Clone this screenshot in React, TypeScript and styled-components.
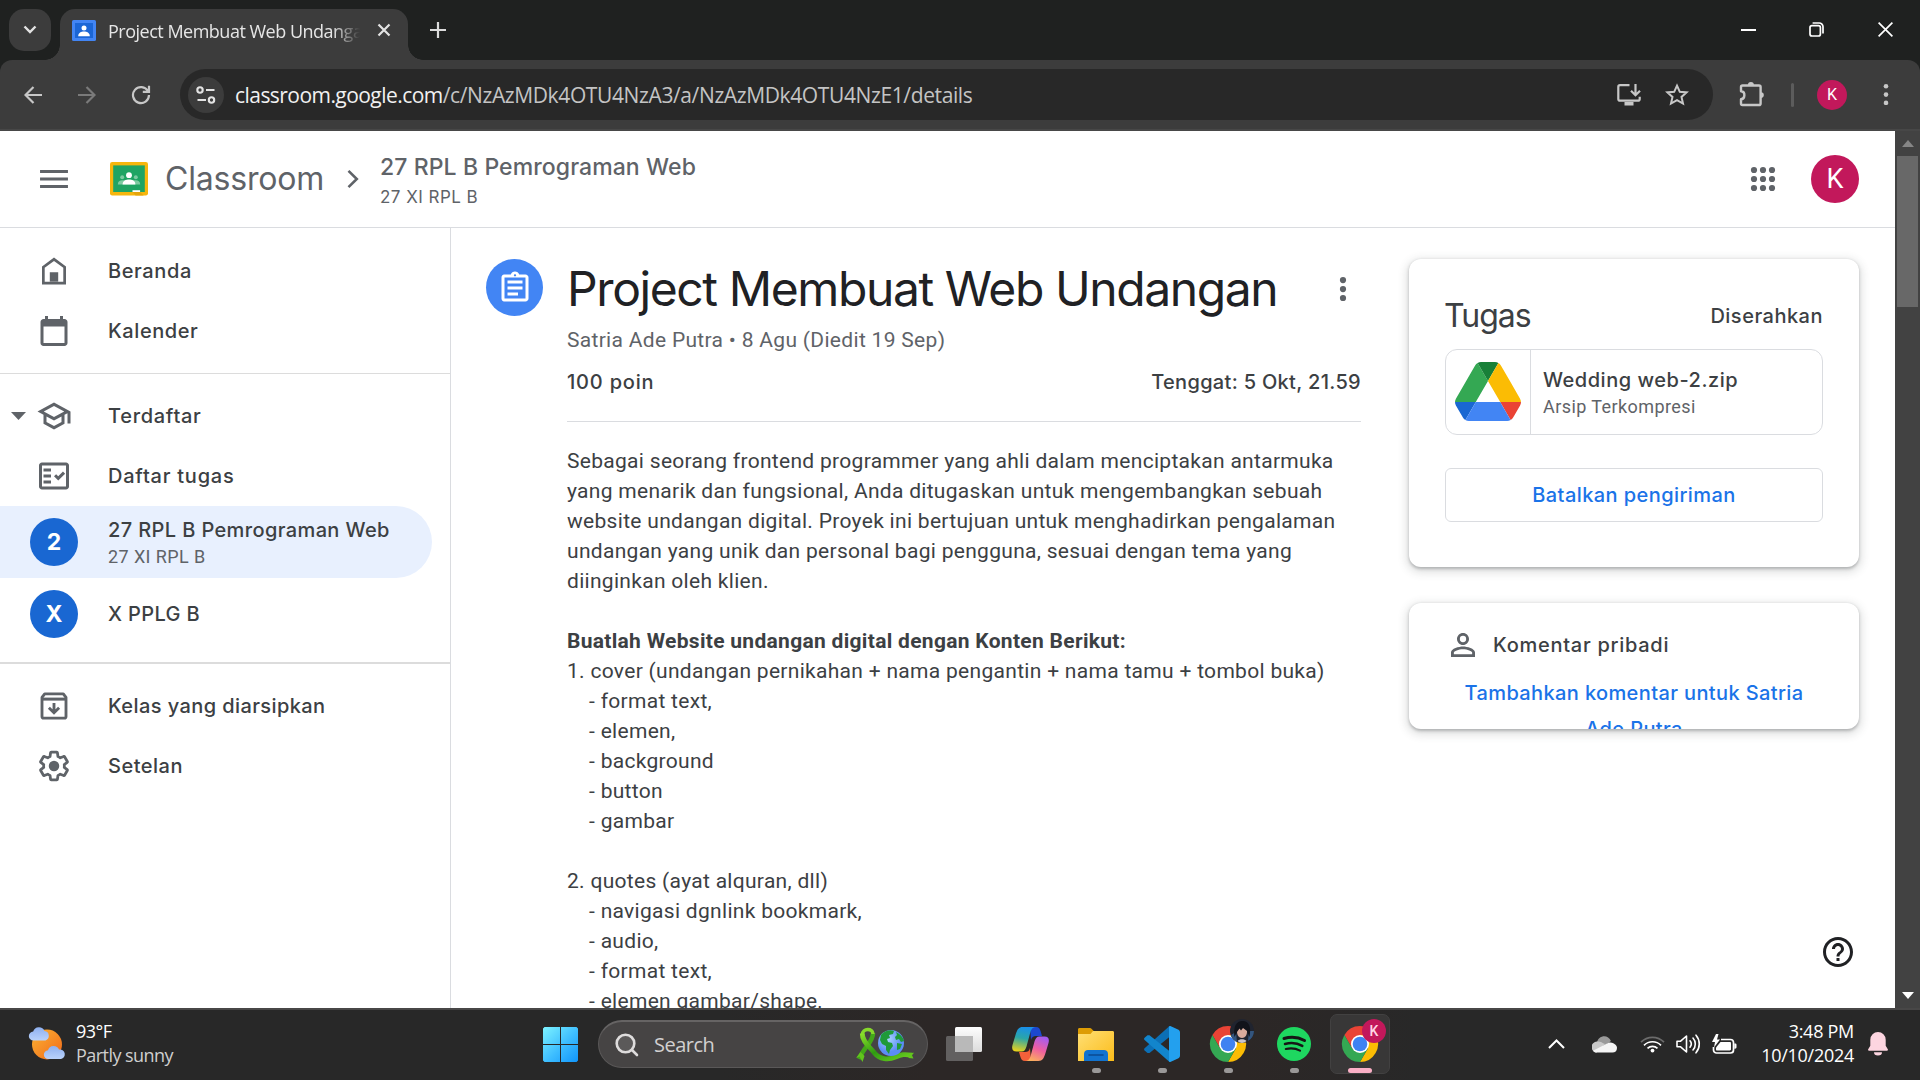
import React from 'react';
import styled, { createGlobalStyle } from 'styled-components';
import {
  MdOutlineFactCheck,
  MdOutlineAssignment,
  MdHelpOutline,
  MdPersonOutline,
  MdOutlineSchool,
} from 'react-icons/md';

const GOOGLE = 'Inter, "Liberation Sans", sans-serif';
const ROBOTO = 'Roboto, "Liberation Sans", sans-serif';
const SEGOE = '"Open Sans", "Noto Sans", sans-serif';

const Global = createGlobalStyle`
  *, *::before, *::after { box-sizing: border-box; }
  body { margin: 0; background: #fff; overflow: hidden; }
  svg { display: block; flex: none; }
`;

const Screen = styled.div`
  width: 1920px;
  height: 1080px;
  display: flex;
  flex-direction: column;
  overflow: hidden;
`;

/* ---------- Browser chrome ---------- */

const TabStrip = styled.div`
  height: 60px;
  flex: none;
  display: flex;
  align-items: flex-start;
  padding: 9px 0 0 9px;
  background: #1f2120;
`;

const TabSearch = styled.div`
  width: 42px;
  height: 42px;
  border-radius: 15px;
  background: #3c3c3c;
  display: flex;
  align-items: center;
  justify-content: center;
`;

const Tab = styled.div`
  position: relative;
  width: 348px;
  height: 51px;
  margin-left: 9px;
  padding: 0 17px 9px 12px;
  border-radius: 15px 15px 0 0;
  background: #3c3c3c;
  display: flex;
  align-items: center;

  &::before,
  &::after {
    content: '';
    position: absolute;
    bottom: 0;
    width: 15px;
    height: 15px;
  }
  &::before {
    left: -15px;
    background: radial-gradient(circle at 0 0, transparent 14.5px, #3c3c3c 15px);
  }
  &::after {
    right: -15px;
    background: radial-gradient(circle at 100% 0, transparent 14.5px, #3c3c3c 15px);
  }
`;

const TabTitle = styled.div`
  width: 252px;
  margin-left: 12px;
  overflow: hidden;
  white-space: nowrap;
  font: 400 18px/27px ${SEGOE};
  letter-spacing: -0.5px;
  padding-top: 3px;
  color: #e6e6e6;
  mask-image: linear-gradient(90deg, #000 225px, transparent 252px);
`;

const TabClose = styled.div`
  margin-left: auto;
`;

const NewTab = styled.div`
  width: 42px;
  height: 42px;
  margin-left: 9px;
  display: flex;
  align-items: center;
  justify-content: center;
`;

const WindowButtons = styled.div`
  display: flex;
  margin-left: auto;
  margin-top: -9px;
  height: 59px;
`;

const WindowButton = styled.div`
  width: 68.5px;
  display: flex;
  align-items: center;
  justify-content: center;
`;

const ToolbarBacking = styled.div`
  flex: none;
  background: #1f2120;
`;

const Toolbar = styled.div`
  height: 71px;
  display: flex;
  align-items: center;
  padding-left: 6px;
  overflow: hidden;
  background: #3c3c3c;
  border-radius: 12px 12px 0 0;
  border-bottom: 2px solid #474747;
`;

const ToolButton = styled.div<{ $w?: number }>`
  width: ${(p) => p.$w ?? 54}px;
  flex: none;
  display: flex;
  align-items: center;
  justify-content: center;
`;

const Omnibox = styled.div`
  width: 1533px;
  height: 51px;
  flex: none;
  margin-left: 12px;
  padding: 0 12px 0 8px;
  border-radius: 26px;
  background: #282828;
  display: flex;
  align-items: center;
`;

const SiteInfo = styled.div`
  width: 36px;
  height: 36px;
  border-radius: 50%;
  background: #3c3c3c;
  display: flex;
  align-items: center;
  justify-content: center;
`;

const Url = styled.div`
  flex: 1;
  margin-left: 11px;
  font: 400 21px/30px ${SEGOE};
  letter-spacing: -0.38px;
  color: #c4c4c4;
`;

const UrlHost = styled.span`
  color: #f1f1f1;
  letter-spacing: -0.55px;
`;

const ToolDivider = styled.div`
  width: 3px;
  height: 24px;
  flex: none;
  border-radius: 2px;
  background: #5c5c5c;
  margin: 0 23px 0 0;
`;

const Avatar = styled.div<{ $size: number; $font: number }>`
  width: ${(p) => p.$size}px;
  height: ${(p) => p.$size}px;
  border-radius: 50%;
  background: #c2185b;
  color: #fff;
  display: flex;
  align-items: center;
  justify-content: center;
  font: 400 ${(p) => p.$font}px/1 ${ROBOTO};
  flex: none;
`;

/* ---------- Page ---------- */

const Viewport = styled.div`
  height: 877px;
  flex: none;
  display: flex;
  overflow: hidden;
`;

const Page = styled.div`
  position: relative;
  width: 1895px;
  display: flex;
  flex-direction: column;
  background: #fff;
`;

const Scrollbar = styled.div`
  width: 25px;
  display: flex;
  flex-direction: column;
  align-items: center;
  background: #424242;
`;

const ScrollArrow = styled.div`
  height: 25px;
  display: flex;
  align-items: center;
`;

const ScrollThumb = styled.div`
  width: 21px;
  height: 151px;
  margin-bottom: auto;
  background: #686868;
`;

const Header = styled.header`
  height: 97px;
  flex: none;
  display: flex;
  align-items: center;
  padding: 0 36px;
  border-bottom: 1px solid #dadce0;
`;

const AppName = styled.div`
  margin-left: 17px;
  width: 161px;
  font: 400 32px/42px ${GOOGLE};
  letter-spacing: -0.2px;
  color: #5f6368;
`;

const Crumb = styled.div`
  margin-left: 20px;
  padding-top: 1px;
  display: flex;
  flex-direction: column;
  gap: 1px;
`;

const CrumbTitle = styled.div`
  font: 500 23px/33px ${GOOGLE};
  letter-spacing: 0.1px;
  color: #5f6368;
`;

const CrumbSection = styled.div`
  font: 400 17px/24px ${GOOGLE};
  letter-spacing: 0.47px;
  color: #5f6368;
`;

const HeaderActions = styled.div`
  margin-left: auto;
  display: flex;
  align-items: center;
  gap: 24px;
`;

const Body = styled.div`
  flex: 1;
  min-height: 0;
  display: flex;
`;

const Sidebar = styled.nav`
  width: 451px;
  flex: none;
  padding-top: 1px;
  border-right: 1px solid #dadce0;
`;

const NavGroup = styled.div<{ $line?: number }>`
  padding: 12px 0;
  border-bottom: ${(p) => p.$line ?? 0}px solid #dcdcdc;
`;

const NavRow = styled.div<{ $tall?: boolean; $active?: boolean }>`
  height: ${(p) => (p.$tall ? 72 : 60)}px;
  width: 432px;
  display: flex;
  align-items: center;
  border-radius: 0 36px 36px 0;
  background: ${(p) => (p.$active ? '#e8f0fe' : 'transparent')};
  color: #5f6368;
`;

const NavIcon = styled.div`
  width: 108px;
  flex: none;
  display: flex;
  justify-content: center;
`;

const NavCaret = styled.div`
  width: 36px;
  margin-right: -36px;
  display: flex;
  justify-content: center;
`;

const NavText = styled.div`
  display: flex;
  flex-direction: column;
`;

const NavLabel = styled.div<{ $ls?: number }>`
  font: 500 20px/30px ${GOOGLE};
  letter-spacing: ${(p) => p.$ls ?? 0.4}px;
  color: #3c4043;
  white-space: nowrap;
`;

const NavSub = styled.div`
  font: 400 18px/24px ${ROBOTO};
  letter-spacing: 0.4px;
  color: #5f6368;
`;

const ClassBadge = styled.div`
  width: 48px;
  height: 48px;
  border-radius: 50%;
  background: #1967d2;
  color: #fff;
  display: flex;
  align-items: center;
  justify-content: center;
  font: 700 23px/1 ${GOOGLE};
`;

const Main = styled.main`
  flex: 1;
  display: flex;
  align-items: flex-start;
  padding: 31px 36px 0 35px;
  overflow: hidden;
`;

const AssignIcon = styled.div`
  width: 57px;
  height: 57px;
  flex: none;
  border-radius: 50%;
  background: #4285f4;
  color: #fff;
  display: flex;
  align-items: center;
  justify-content: center;
`;

const Article = styled.article`
  width: 794px;
  flex: none;
  margin-left: 24px;
  margin-top: -2px;
`;

const TitleRow = styled.div`
  display: flex;
  align-items: center;
  justify-content: space-between;
  padding: 2px 12px 0 0;
  height: 62px;
`;

const Title = styled.h1`
  margin: 0;
  font: 400 48px/60px ${GOOGLE};
  letter-spacing: -1.4px;
  color: #202124;
  white-space: nowrap;
`;

const Byline = styled.div`
  margin-top: 6px;
  font: 400 21px/30px ${ROBOTO};
  letter-spacing: 0.31px;
  color: #5f6368;
`;

const Facts = styled.div`
  display: flex;
  justify-content: space-between;
  margin-top: 12px;
  padding-bottom: 24px;
  border-bottom: 1px solid #dadce0;
`;

const Strong = styled.div<{ $ls: number }>`
  font: 500 20px/30px ${GOOGLE};
  letter-spacing: ${(p) => p.$ls}px;
  color: #3c4043;
  white-space: nowrap;
`;

const Description = styled.div`
  margin-top: 24px;
  font: 400 21px/30px ${ROBOTO};
  letter-spacing: 0.3px;
  color: #3c4043;
  white-space: pre;
`;

const Aside = styled.aside`
  margin-left: 48px;
  width: 450px;
  display: flex;
  flex-direction: column;
  gap: 36px;
`;

const Card = styled.section<{ $h: number; $pad: string }>`
  height: ${(p) => p.$h}px;
  padding: ${(p) => p.$pad};
  border-radius: 12px;
  background: #fff;
  overflow: hidden;
  box-shadow: 0 1.5px 3px rgba(60, 64, 67, 0.3), 0 3px 9px 3px rgba(60, 64, 67, 0.15);
`;

const CardHead = styled.div`
  height: 48px;
  display: flex;
  align-items: center;
  justify-content: space-between;
`;

const CardTitle = styled.h2`
  margin: 0 0 0 -1px;
  font: 400 32px/48px ${GOOGLE};
  letter-spacing: -1px;
  color: #3c4043;
`;

const Attachment = styled.div`
  height: 86px;
  margin-top: 9px;
  border: 1px solid #dadce0;
  border-radius: 12px;
  display: flex;
`;

const AttachmentThumb = styled.div`
  width: 85px;
  padding-bottom: 2px;
  border-right: 1px solid #dadce0;
  display: flex;
  align-items: center;
  justify-content: center;
`;

const AttachmentText = styled.div`
  padding: 15px 0 0 12px;
`;

const FileKind = styled.div`
  margin-top: -1px;
  font: 400 18px/26px ${ROBOTO};
  letter-spacing: 0.42px;
  color: #5f6368;
`;

const OutlineButton = styled.div`
  height: 54px;
  margin-top: 33px;
  border: 1px solid #dadce0;
  border-radius: 6px;
  display: flex;
  align-items: center;
  justify-content: center;
  font: 500 20px/30px ${GOOGLE};
  letter-spacing: 0.42px;
  color: #1a73e8;
`;

const CommentHead = styled.div`
  height: 36px;
  display: flex;
  align-items: center;
  gap: 12px;
  color: #5f6368;
`;

const CommentLink = styled.div`
  margin-top: 12px;
  text-align: center;
  font: 500 20px/36px ${GOOGLE};
  letter-spacing: 0.38px;
  color: #1a73e8;
`;

const HelpButton = styled.div`
  position: absolute;
  right: 39px;
  bottom: 38px;
  color: #202124;
`;

/* ---------- Taskbar ---------- */

const Taskbar = styled.footer`
  height: 72px;
  flex: none;
  display: flex;
  align-items: center;
  padding-bottom: 2px;
  border-top: 2px solid #484747;
  background: linear-gradient(90deg, #282828 0 720px, #2c2726 930px 1240px, #282828 1420px);
  font: 400 18px/24px ${SEGOE};
  color: #fff;
`;

const Weather = styled.div`
  width: 535px;
  padding-left: 28px;
  display: flex;
  align-items: center;
  gap: 10px;
`;

const TwoLines = styled.div<{ $right?: boolean; $ls: number }>`
  text-align: ${(p) => (p.$right ? 'right' : 'left')};
  letter-spacing: ${(p) => p.$ls}px;
  margin-top: -3px;
`;

const Muted = styled.div`
  color: #cfcfcf;
`;

const Start = styled.div`
  width: 63px;
  padding-left: 8px;
`;

const SearchBox = styled.div`
  width: 330px;
  height: 48px;
  padding: 0 13px 0 16px;
  border: 1px solid #5a5858;
  border-top: 2px solid #666464;
  border-radius: 24px;
  background: #464444;
  display: flex;
  align-items: center;
`;

const SearchLabel = styled.div`
  margin-left: 15px;
  font: 400 20px/30px ${SEGOE};
  letter-spacing: -0.5px;
  color: #d2d0d0;
  flex: 1;
`;

const Apps = styled.div`
  display: flex;
  margin-left: 3px;
`;

const AppCell = styled.div`
  width: 66px;
  height: 60px;
  display: flex;
  justify-content: center;
`;

const AppTile = styled.div<{ $active?: boolean }>`
  position: relative;
  width: 60px;
  height: 60px;
  border-radius: 7px;
  border: 1px solid ${(p) => (p.$active ? '#424141' : 'transparent')};
  background: ${(p) => (p.$active ? '#383737' : 'transparent')};
  display: flex;
  align-items: center;
  justify-content: center;
`;

const RunMark = styled.div<{ $active?: boolean }>`
  position: absolute;
  bottom: 0;
  left: ${(p) => (p.$active ? 17 : 24.5)}px;
  width: ${(p) => (p.$active ? 24 : 9)}px;
  height: 5px;
  border-radius: 3px;
  background: ${(p) => (p.$active ? '#fbb0c6' : '#9a9898')};
`;

const Tray = styled.div`
  margin-left: auto;
  padding-right: 32px;
  display: flex;
  align-items: center;
`;

const TraySlot = styled.div<{ $gap: number }>`
  margin-left: ${(p) => p.$gap}px;
`;

/* ---------- Drawings ---------- */

const Glyph = ({ d, size = 36 }: { d: string; size?: number }) => (
  <svg width={size} height={size} viewBox="0 0 24 24" fill="currentColor"><path d={d} /></svg>
);

const HOME = 'M12 3 4 9v12h16V9l-8-6zm6.200 16.200H5.800v-9.300L12 5.300l6.200 4.600v9.300zM9.200 12.800h5.600v6.500H9.200z';
const CALENDAR = 'M19 4h-1V2h-2v2H8V2H6v2H5c-1.11 0-1.99.9-1.99 2L3 20c0 1.1.89 2 2 2h14c1.1 0 2-.9 2-2V6c0-1.1-.9-2-2-2zm0 16H5V9h14v11z';
const GEAR = 'M19.43 12.98c.04-.32.07-.64.07-.98 0-.34-.03-.66-.07-.98l2.11-1.65c.19-.15.24-.42.12-.64l-2-3.46a.5.5 0 0 0-.61-.22l-2.49 1c-.52-.4-1.08-.73-1.69-.98l-.38-2.65A.488.488 0 0 0 14 2h-4c-.25 0-.46.18-.49.42l-.38 2.65c-.61.25-1.17.59-1.69.98l-2.49-1a.566.566 0 0 0-.18-.03c-.17 0-.34.09-.43.25l-2 3.46c-.13.22-.07.49.12.64l2.11 1.65c-.04.32-.07.65-.07.98 0 .33.03.66.07.98l-2.11 1.65c-.19.15-.24.42-.12.64l2 3.46a.5.5 0 0 0 .61.22l2.49-1c.52.4 1.08.73 1.69.98l.38 2.65c.03.24.24.42.49.42h4c.25 0 .46-.18.49-.42l.38-2.65c.61-.25 1.17-.59 1.69-.98l2.49 1c.06.02.12.03.18.03.17 0 .34-.09.43-.25l2-3.46c.12-.22.07-.49-.12-.64l-2.11-1.65z';

const GearIcon = () => (
  <svg width="36" height="36" viewBox="0 0 24 24">
    <path d={GEAR} transform="translate(12 12) scale(.92) translate(-12 -12)" fill="none" stroke="currentColor" strokeWidth="2" strokeLinejoin="round" />
    <circle cx="12" cy="12" r="3.500" fill="currentColor" />
  </svg>
);

const ArchiveIcon = () => (
  <svg width="36" height="36" viewBox="0 0 24 24" fill="none" stroke="currentColor" strokeWidth="1.900">
    <path d="M4 6.300 5.800 3.900h12.400L20 6.300v12.700c0 .7-.4 1.100-1.100 1.100H5.100c-.7 0-1.100-.4-1.100-1.100z" strokeLinejoin="round" />
    <path d="M4 7.400h16" strokeWidth="2" />
    <path d="M12 10v6.300M8.600 13.100l3.400 3.400 3.400-3.400" />
  </svg>
);

const Kebab = ({ r, gap, color }: { r: number; gap: number; color: string }) => (
  <svg width={12} height={gap * 2 + r * 2} fill={color}>
    {[0, 1, 2].map((i) => <circle key={i} cx="6" cy={r + i * gap} r={r} />)}
  </svg>
);

const AppsGrid = () => (
  <svg width="48" height="48" fill="#5f6368">
    {[15, 24, 33].map((y) => [15, 24, 33].map((x) => <circle key={`${x}-${y}`} cx={x} cy={y} r="3.1" />))}
  </svg>
);

const ClassroomLogo = () => (
  <svg width="38" height="34" viewBox="0 0 38 34">
    <rect width="38" height="33.5" rx="2.2" fill="#f6b60d" />
    <rect x="3.2" y="3.4" width="31.6" height="26.6" fill="#1fa463" />
    <circle cx="19" cy="13.2" r="2.9" fill="#fff" />
    <circle cx="12.2" cy="15.2" r="2" fill="#7ccba1" />
    <circle cx="25.8" cy="15.2" r="2" fill="#7ccba1" />
    <path d="M7.8 22.5c0-3 2-4.2 4.4-4.2h13.6c2.4 0 4.4 1.2 4.4 4.2z" fill="#7ccba1" />
    <path d="M12.6 22.5c0-3.7 3.4-4.9 6.4-4.9s6.4 1.2 6.4 4.9z" fill="#fff" />
    <path d="M22.5 30v-1.8h7.6V30z" fill="#fff" />
    <path d="M22.5 30h7.6l3.5 3.5h-8z" fill="#e5a50c" />
  </svg>
);

const TabIcon = () => (
  <svg width="24" height="21" viewBox="0 0 24 21">
    <rect width="24" height="21" rx="1.6" fill="#4285f4" />
    <rect x="3" y="3" width="18" height="15" fill="#1b66d6" />
    <circle cx="12" cy="8" r="2.5" fill="#fff" />
    <path d="M6.2 16.2c0-3.6 3-4.7 5.8-4.7s5.8 1.1 5.8 4.7z" fill="#fff" />
  </svg>
);

const DriveLogo = () => (
  <svg width="66" height="59" viewBox="0 0 87.3 78">
    <path fill="#1967d2" d="m6.6 66.85 3.85 6.65c.8 1.4 1.95 2.5 3.3 3.3L27.5 53H0c0 1.55.4 3.1 1.2 4.5z" />
    <path fill="#34a853" d="M43.65 25 29.9 1.2c-1.35.8-2.5 1.9-3.3 3.3L1.2 48.5C.4 49.9 0 51.45 0 53h27.5z" />
    <path fill="#ea4335" d="M73.55 76.8c1.35-.8 2.5-1.9 3.3-3.3l1.6-2.75 7.65-13.25c.8-1.4 1.2-2.95 1.2-4.5H59.8z" />
    <path fill="#188038" d="M43.65 25 57.4 1.2C56.05.4 54.5 0 52.9 0H34.4c-1.6 0-3.15.45-4.5 1.2z" />
    <path fill="#4285f4" d="M59.8 53H27.5L13.75 76.8c1.35.8 2.9 1.2 4.5 1.2h50.8c1.6 0 3.15-.45 4.5-1.2z" />
    <path fill="#fbbc04" d="m73.4 26.5-12.7-22c-.8-1.4-1.95-2.5-3.3-3.3L43.65 25l16.15 28h27.45c0-1.55-.4-3.1-1.2-4.5z" />
  </svg>
);

const line = { fill: 'none', stroke: '#c7c7c7', strokeWidth: 2.2 } as const;

const WeatherIcon = () => (
  <svg width="38" height="36" viewBox="0 0 38 36">
    <defs>
      <linearGradient id="sun" x1="0" y1="0" x2="1" y2="1"><stop offset="0" stopColor="#fcb332" /><stop offset="1" stopColor="#f0681a" /></linearGradient>
      <linearGradient id="cloud" x1="0" y1="0" x2="0" y2="1"><stop offset="0" stopColor="#8fb0f0" /><stop offset="1" stopColor="#b9d2fb" /></linearGradient>
    </defs>
    <circle cx="19" cy="18.5" r="15" fill="url(#sun)" />
    <path d="M5.5 14.5a4.5 4.5 0 0 1-.3-9A6 6 0 0 1 16.500 5a4.900 4.900 0 0 1 1 9.500z" fill="url(#cloud)" />
    <path d="M20.500 33a4.400 4.400 0 0 1-.5-8.800 5.800 5.800 0 0 1 11-.6A4.800 4.800 0 0 1 33 33z" fill="url(#cloud)" />
  </svg>
);

const WindowsLogo = () => (
  <svg width="35" height="35" viewBox="0 0 35 35">
    <defs><linearGradient id="win" gradientUnits="userSpaceOnUse" x1="0" y1="0" x2="35" y2="35"><stop offset="0" stopColor="#7df3ff" /><stop offset=".55" stopColor="#3dbdff" /><stop offset="1" stopColor="#1095fb" /></linearGradient></defs>
    <path fill="url(#win)" d="M1.500 0H17v17H0V1.500zM18 0h15.500L35 1.500V17H18zM0 18h17v17H1.500L0 33.500zM18 18h17v15.500L33.500 35H18z" />
  </svg>
);

const RibbonGlobe = () => (
  <svg width="58" height="35" viewBox="0 0 58 35">
    <defs>
      <linearGradient id="rib" x1="0" y1="0" x2="1" y2="1"><stop offset="0" stopColor="#8be02a" /><stop offset=".5" stopColor="#2f9a12" /><stop offset="1" stopColor="#6fd321" /></linearGradient>
      <radialGradient id="sea" cx=".4" cy=".35"><stop offset="0" stopColor="#a9d4ff" /><stop offset="1" stopColor="#5b8df5" /></radialGradient>
    </defs>
    <path d="M17 6.500C17 15 8 20 3 32" fill="none" stroke="#43a818" strokeWidth="4.600" />
    <path d="M6.500 7.500C6.500 1 17 1 17 7" fill="none" stroke="#86d82c" strokeWidth="3.600" />
    <path d="M6.300 6.500C6 15 14 20 18.500 26c5 6.500 14 7 21 4 6-2.500 9-3 16-1.800" fill="none" stroke="url(#rib)" strokeWidth="4.800" />
    <path d="M0 31l3.500-1.500L6.500 35l2-6-4-4zM53 26l5-.3-2 2.500 1.500 3.300-5-.5z" fill="#62c51d" />
    <circle cx="35" cy="16" r="13" fill="url(#sea)" />
    <path d="M25 8c3-4 9-6 13-4l-1 3-4 1 1 3-3 1 1 3 4 1 1 3-3 4-1 4-3-4v-4l-4-2-2-4zM40 5c4 2 7 5 8 9l-3 1-2-3-3 1-1-3 2-2zM41 16l5 1-2 5-3 1z" fill="#1f9a3a" />
  </svg>
);

const TaskView = () => (
  <svg width="36" height="34" viewBox="0 0 36 34">
    <defs><linearGradient id="tv" x1="0" y1="0" x2="0" y2="1"><stop offset="0" stopColor="#fdfdfd" /><stop offset="1" stopColor="#dcdcdc" /></linearGradient></defs>
    <rect x="0" y="9" width="27" height="25" rx="1.500" fill="#626060" />
    <rect x="9" y="0" width="27" height="25" rx="1.500" fill="url(#tv)" />
    <path d="M9 9h18v16H9z" fill="#b9b9b9" />
  </svg>
);

const Copilot = () => (
  <svg width="37" height="34" viewBox="0 0 37 34">
    <defs>
      <linearGradient id="cpA" x1=".5" y1="0" x2=".3" y2="1"><stop offset="0" stopColor="#1a8fe8" /><stop offset=".45" stopColor="#2aa6a8" /><stop offset="1" stopColor="#e9d21b" /></linearGradient>
      <linearGradient id="cpB" x1=".7" y1="0" x2=".3" y2="1"><stop offset="0" stopColor="#a45cf0" /><stop offset=".5" stopColor="#ef5f9f" /><stop offset="1" stopColor="#fbb05c" /></linearGradient>
    </defs>
    <path d="M18 0h6c3 0 4 2 4.700 4.500L30 9h-6c-3 0-4 1-5 4z" fill="#1c48cf" />
    <path d="M19 34h-6c-3 0-4-2-4.700-4.500L7 25h6c3 0 4-1 5-4z" fill="#f2603a" />
    <path d="M24 0H10.500C6.500 0 5 3 3.500 8L.5 18c-1 4 0 6.500 4 6.500h5c3 0 4-2 5-5L18 6.500C19 2 21 0 24 0z" fill="url(#cpA)" />
    <path d="M13 34h13.500c4 0 5.500-3 7-8l3-10c1-4 0-6.500-4-6.500h-5c-3 0-4 2-5 5L19 27.500C18 32 16 34 13 34z" fill="url(#cpB)" />
  </svg>
);

const Explorer = () => (
  <svg width="36" height="33" viewBox="0 0 36 33">
    <defs><linearGradient id="fold" x1="0" y1="0" x2="1" y2="1"><stop offset="0" stopColor="#ffdf75" /><stop offset="1" stopColor="#fbbc1a" /></linearGradient></defs>
    <path d="M0 1.500C0 .6.500 0 1.500 0h10c1 0 1.500.3 2.200 1L16 3.200V9H0z" fill="#dd9c05" />
    <path d="M0 6h12.500L15 3h19.500c1 0 1.500.6 1.500 1.500V33H0z" fill="url(#fold)" />
    <path d="M6 33v-7c0-2.400 1.600-4 4-4h16c2.400 0 4 1.600 4 4v7z" fill="#1273cf" />
    <path d="M11 27h14" stroke="#0b4b93" strokeWidth="1.600" strokeLinecap="round" />
  </svg>
);

const VsCode = () => (
  <svg width="36" height="36" viewBox="0 0 36 36">
    <path d="M26 0v10.500L5.500 27 3.500 27 .6 24.400c-.7-.7-.7-1.500 0-2.200L25 .5z" fill="#0c6fb5" />
    <path d="M26 36V25.500L5.500 9.200H3.500L.6 11.800c-.7.700-.7 1.500 0 2.200L25 35.500z" fill="#1285cc" />
    <path d="M26.300 0 34 3.600c1.300.6 2 1.500 2 2.900v23c0 1.400-.7 2.300-2 2.900L26.300 36c-.8 0-1.300-.4-1.300-1.300V1.300c0-.9.500-1.300 1.300-1.300z" fill="#23a0ee" />
  </svg>
);

const BadgeText = styled.text`
  font: 500 14px ${ROBOTO};
  fill: #ffd5e4;
  text-anchor: middle;
`;

const Chrome = ({ badge }: { badge: 'photo' | 'letter' }) => (
  <svg width="60" height="60" viewBox="-30 -30 60 60">
    <path d="M-15.600-9A18 18 0 0 1 15.600-9H0L-7.800 4.500z" fill="#ea4335" />
    <path d="M15.600-9A18 18 0 0 1 0 18L7.800 4.500 0-9z" fill="#fbbc04" />
    <path d="M0 18A18 18 0 0 1-15.600-9L-7.800 4.500H7.800z" fill="#34a853" />
    <circle r="9" fill="#fff" />
    <circle r="7.300" fill="#3f82f1" />
    {badge === 'letter' ? (
      <>
        <circle cx="14" cy="-13" r="12" fill="#c2185b" />
        <BadgeText x="14" y="-8">K</BadgeText>
      </>
    ) : (
      <>
        <circle cx="14" cy="-13" r="12" fill="#20242f" />
        <path d="M3-9a12 12 0 0 0 6 7.200L8-12zM26-13a12 12 0 0 1-6 10l1-10z" fill="#33557e" />
        <path d="M9-14c1-4 9-4 10 0 .5 5-2 8-5 8s-5.500-3-5-8z" fill="#d9ab9c" />
        <path d="M6.500-7C5-20 10-23 14.500-23S24-20 21.500-7L19-13l-4-3-2 2.500-1.500-2L9-12z" fill="#11131a" />
        <path d="M9.500-3c2-2.500 7-2.500 9 0-2.500 2.500-6.500 2.500-9 0z" fill="#c9c4cc" />
      </>
    )}
  </svg>
);

const Spotify = () => (
  <svg width="34" height="34" viewBox="0 0 34 34">
    <circle cx="17" cy="17" r="17" fill="#1ed760" />
    <g fill="none" stroke="#161616" strokeLinecap="round">
      <path d="M7 11.500c7-2 14.500-1.300 20.500 2" strokeWidth="3" />
      <path d="M8 17c6-1.600 12.200-1 17.300 1.900" strokeWidth="2.500" />
      <path d="M8.800 22c5-1.200 10-.7 14.200 1.700" strokeWidth="2.100" />
    </g>
  </svg>
);

/* ---------- Content ---------- */

const DESCRIPTION_INTRO = `Sebagai seorang frontend programmer yang ahli dalam menciptakan antarmuka
yang menarik dan fungsional, Anda ditugaskan untuk mengembangkan sebuah
website undangan digital. Proyek ini bertujuan untuk menghadirkan pengalaman
undangan yang unik dan personal bagi pengguna, sesuai dengan tema yang
diinginkan oleh klien.

`;

const DESCRIPTION_LIST = `
1. cover (undangan pernikahan + nama pengantin + nama tamu + tombol buka)
    - format text,
    - elemen,
    - background
    - button
    - gambar

2. quotes (ayat alquran, dll)
    - navigasi dgnlink bookmark,
    - audio,
    - format text,
    - elemen gambar/shape,`;

export default function App() {
  return (
    <Screen>
      <Global />
      <TabStrip>
        <TabSearch>
          <svg width="14" height="10" fill="none" stroke="#e3e3e3" strokeWidth="2.400"><path d="M1.500 1.500 7 7l5.500-5.500" /></svg>
        </TabSearch>
        <Tab>
          <TabIcon />
          <TabTitle>Project Membuat Web Undangan</TabTitle>
          <TabClose>
            <svg width="14" height="14" stroke="#e3e3e3" strokeWidth="2.200"><path d="m1.500 1.500 11 11m0-11-11 11" /></svg>
          </TabClose>
        </Tab>
        <NewTab>
          <svg width="16" height="16" stroke="#dcdcdc" strokeWidth="2.200"><path d="M8 0v16M0 8h16" /></svg>
        </NewTab>
        <WindowButtons>
          <WindowButton><svg width="15" height="2"><path d="M0 0h15v2H0z" fill="#fff" /></svg></WindowButton>
          <WindowButton>
            <svg width="16" height="15" fill="none" stroke="#fff" strokeWidth="1.700"><rect x="1" y="3.600" width="10.400" height="10.400" rx="2" /><path d="M3.600 1h6.600A3.800 3.800 0 0 1 14 4.800v6.600" /></svg>
          </WindowButton>
          <WindowButton><svg width="15" height="15" stroke="#fff" strokeWidth="1.700"><path d="m.6.6 13.800 13.800m0-13.800L.6 14.400" /></svg></WindowButton>
        </WindowButtons>
      </TabStrip>

      <ToolbarBacking>
        <Toolbar>
          <ToolButton><svg width="18" height="18" {...line}><path d="M18 9H1.500M9.500 1 1.500 9l8 8" /></svg></ToolButton>
          <ToolButton><svg width="18" height="18" {...line} stroke="#7a7a7a"><path d="M0 9h16.500M8.500 1l8 8-8 8" /></svg></ToolButton>
          <ToolButton>
            <svg width="20" height="20" {...line}><path d="M17 6.200A8 8 0 1 0 18 10" /><path d="M18 .8v6.100h-6.200" /></svg>
          </ToolButton>
          <Omnibox>
            <SiteInfo>
              <svg width="20" height="18" fill="none" stroke="#e3e3e3" strokeWidth="2.100"><circle cx="4" cy="4" r="2.700" /><path d="M10 4h8.500M1.500 14H10" /><circle cx="15.500" cy="14" r="2.700" /></svg>
            </SiteInfo>
            <Url><UrlHost>classroom.google.com</UrlHost>/c/NzAzMDk4OTU4NzA3/a/NzAzMDk4OTU4NzE1/details</Url>
            <ToolButton $w={48}>
              <svg width="24" height="22" {...line}><path d="M12.500 1.200H3c-1 0-1.700.7-1.700 1.700v12c0 1 .7 1.700 1.700 1.700h18c1 0 1.700-.7 1.700-1.700v-2.200" /><path d="M7.500 19.800h9" strokeWidth="3.400" /><path d="M18.500 0v11M14 6.700l4.500 4.500L23 6.700" /></svg>
            </ToolButton>
            <ToolButton $w={48}>
              <svg width="24" height="23" {...line} strokeWidth="2"><path d="m12 2.600 2.800 6.200 6.800.6-5.100 4.500 1.500 6.700-6-3.500-6 3.500 1.500-6.700-5.100-4.500 6.800-.6z" /></svg>
            </ToolButton>
          </Omnibox>
          <ToolButton $w={78}>
            <svg width="27" height="26" fill="none" stroke="#c7c7c7" strokeWidth="2.400" strokeLinejoin="round"><path d="M3.500 3.500H20a1.600 1.600 0 0 1 1.600 1.600v16.300A1.600 1.600 0 0 1 20 23H3.500c-.9 0-1.500-.6-1.500-1.500v-4.300c4 0 5-7.500 0-8V5c0-.9.600-1.500 1.500-1.500z" /><path d="M8.900 3a3 3 0 0 1 6 0zM22 10.300a2.700 2.700 0 0 1 0 5.600z" fill="#c7c7c7" stroke="none" /></svg>
          </ToolButton>
          <ToolDivider />
          <Avatar $size={30} $font={16}>K</Avatar>
          <ToolButton $w={78}><Kebab r={2.300} gap={8.300} color="#c7c7c7" /></ToolButton>
        </Toolbar>
      </ToolbarBacking>

      <Viewport>
        <Page>
          <Header>
            <svg width="36" height="36" viewBox="0 0 24 24" fill="#5f6368"><path d="M2.700 18h18.600v-2H2.700zm0-5h18.600v-2H2.700zm0-7v2h18.600V6z" /></svg>
            <svg width="38" height="36" />
            <ClassroomLogo />
            <AppName>Classroom</AppName>
            <svg width="34" height="20" fill="none" stroke="#5f6368" strokeWidth="2.600"><path d="m22.500 1.800 8.300 8.200-8.300 8.200" /></svg>
            <Crumb>
              <CrumbTitle>27 RPL B Pemrograman Web</CrumbTitle>
              <CrumbSection>27 XI RPL B</CrumbSection>
            </Crumb>
            <HeaderActions>
              <AppsGrid />
              <Avatar $size={48} $font={27}>K</Avatar>
            </HeaderActions>
          </Header>

          <Body>
            <Sidebar>
              <NavGroup $line={1}>
                <NavRow><NavIcon><Glyph d={HOME} /></NavIcon><NavLabel $ls={0.6}>Beranda</NavLabel></NavRow>
                <NavRow><NavIcon><Glyph d={CALENDAR} /></NavIcon><NavLabel $ls={0.58}>Kalender</NavLabel></NavRow>
              </NavGroup>
              <NavGroup $line={2}>
                <NavRow>
                  <NavCaret><svg width="15" height="8" fill="currentColor"><path d="M0 0h15L7.500 8z" /></svg></NavCaret>
                  <NavIcon><MdOutlineSchool size={36} /></NavIcon>
                  <NavLabel $ls={0.7}>Terdaftar</NavLabel>
                </NavRow>
                <NavRow><NavIcon><MdOutlineFactCheck size={36} /></NavIcon><NavLabel $ls={0.76}>Daftar tugas</NavLabel></NavRow>
                <NavRow $tall $active>
                  <NavIcon><ClassBadge>2</ClassBadge></NavIcon>
                  <NavText>
                    <NavLabel $ls={0.38}>27 RPL B Pemrograman Web</NavLabel>
                    <NavSub>27 XI RPL B</NavSub>
                  </NavText>
                </NavRow>
                <NavRow $tall>
                  <NavIcon><ClassBadge>X</ClassBadge></NavIcon>
                  <NavLabel $ls={0.36}>X PPLG B</NavLabel>
                </NavRow>
              </NavGroup>
              <NavGroup>
                <NavRow><NavIcon><ArchiveIcon /></NavIcon><NavLabel $ls={0.41}>Kelas yang diarsipkan</NavLabel></NavRow>
                <NavRow><NavIcon><GearIcon /></NavIcon><NavLabel $ls={0.5}>Setelan</NavLabel></NavRow>
              </NavGroup>
            </Sidebar>

            <Main>
              <AssignIcon><MdOutlineAssignment size={36} /></AssignIcon>
              <Article>
                <TitleRow>
                  <Title>Project Membuat Web Undangan</Title>
                  <Kebab r={3.100} gap={9} color="#5f6368" />
                </TitleRow>
                <Byline>Satria Ade Putra • 8 Agu (Diedit 19 Sep)</Byline>
                <Facts>
                  <Strong $ls={0.8}>100 poin</Strong>
                  <Strong $ls={0.31}>Tenggat: 5 Okt, 21.59</Strong>
                </Facts>
                <Description>
                  {DESCRIPTION_INTRO}
                  <b>Buatlah Website undangan digital dengan Konten Berikut:</b>
                  {DESCRIPTION_LIST}
                </Description>
              </Article>

              <Aside>
                <Card $h={308} $pad="33px 36px 0">
                  <CardHead>
                    <CardTitle>Tugas</CardTitle>
                    <Strong $ls={0.5}>Diserahkan</Strong>
                  </CardHead>
                  <Attachment>
                    <AttachmentThumb><DriveLogo /></AttachmentThumb>
                    <AttachmentText>
                      <Strong $ls={0.52}>Wedding web-2.zip</Strong>
                      <FileKind>Arsip Terkompresi</FileKind>
                    </AttachmentText>
                  </Attachment>
                  <OutlineButton>Batalkan pengiriman</OutlineButton>
                </Card>
                <Card $h={126} $pad="24px 36px 0">
                  <CommentHead>
                    <MdPersonOutline size={36} />
                    <Strong $ls={0.72}>Komentar pribadi</Strong>
                  </CommentHead>
                  <CommentLink>Tambahkan komentar untuk Satria<br />Ade Putra</CommentLink>
                </Card>
              </Aside>
            </Main>
          </Body>
          <HelpButton><MdHelpOutline size={36} /></HelpButton>
        </Page>
        <Scrollbar>
          <ScrollArrow><svg width="12" height="7"><path d="M0 7h12L6 0z" fill="#868686" /></svg></ScrollArrow>
          <ScrollThumb />
          <ScrollArrow><svg width="12" height="7"><path d="M0 0h12L6 7z" fill="#fff" /></svg></ScrollArrow>
        </Scrollbar>
      </Viewport>

      <Taskbar>
        <Weather>
          <WeatherIcon />
          <TwoLines $ls={-0.55}>
            <div>93°F</div>
            <Muted>Partly sunny</Muted>
          </TwoLines>
        </Weather>
        <Start><WindowsLogo /></Start>
        <SearchBox>
          <svg width="24" height="24" fill="none" stroke="#dedcdc" strokeWidth="2.600" strokeLinecap="round"><circle cx="10.500" cy="10.500" r="8.800" fill="#5b5959" /><path d="m17 17 5 5" /></svg>
          <SearchLabel>Search</SearchLabel>
          <RibbonGlobe />
        </SearchBox>
        <Apps>
          <AppCell><AppTile><TaskView /></AppTile></AppCell>
          <AppCell><AppTile><Copilot /></AppTile></AppCell>
          <AppCell><AppTile><Explorer /><RunMark /></AppTile></AppCell>
          <AppCell><AppTile><VsCode /><RunMark /></AppTile></AppCell>
          <AppCell><AppTile><Chrome badge="photo" /><RunMark /></AppTile></AppCell>
          <AppCell><AppTile><Spotify /><RunMark /></AppTile></AppCell>
          <AppCell><AppTile $active><Chrome badge="letter" /><RunMark $active /></AppTile></AppCell>
        </Apps>
        <Tray>
          <svg width="17" height="10" fill="none" stroke="#fff" strokeWidth="2"><path d="m1 9 7.500-7.500L16 9" /></svg>
          <TraySlot $gap={27}>
            <svg width="25" height="17" viewBox="0 0 25 17"><path d="M5 6C7-1 16-2 19 5l-7 5z" fill="#9a9a9a" /><path d="M5 16.500A5.400 5.400 0 0 1 5 5.600c3-.6 5 1 8 2.400l-8 8z" fill="#c9c9c9" /><path d="M4.500 16.500c-1.600 0-2.700-.6-3.500-1.800L17 6.500c4 0 8 2 8 5.500 0 3-2 4.500-4.500 4.500z" fill="#f5f5f5" /></svg>
          </TraySlot>
          <TraySlot $gap={23}>
            <svg width="25" height="18" fill="none" stroke="#fff" strokeWidth="1.700"><path d="M1 7.200a16 16 0 0 1 23 0" stroke="#6b6b6b" /><path d="M4 10.300a12 12 0 0 1 17 0M7.500 13.400a7.400 7.400 0 0 1 10 0" /><circle cx="12.500" cy="15.600" r="1.900" fill="#fff" stroke="none" /></svg>
          </TraySlot>
          <TraySlot $gap={11}>
            <svg width="26" height="20" fill="none" stroke="#fff" strokeWidth="1.600" strokeLinejoin="round"><path d="M1 7.200v5.600h3.600L10.500 18V2L4.600 7.200z" /><path d="M14 6.800a5 5 0 0 1 0 6.400M17 4a9 9 0 0 1 0 12M20 1.200a13.500 13.500 0 0 1 0 17.600" strokeLinecap="round" /></svg>
          </TraySlot>
          <TraySlot $gap={10}>
            <svg width="25" height="21" viewBox="0 0 25 21"><path d="M9 5.500h9.500a3 3 0 0 1 3 3v7.500a3 3 0 0 1-3 3H4.500a3 3 0 0 1-3-3V13" fill="none" stroke="#fff" strokeWidth="1.700" /><path d="M8.500 8h9.300c.7 0 1.200.5 1.200 1.200v6c0 .7-.5 1.200-1.200 1.200H5c-.6 0-1-.4-1-1V13.500z" fill="#fff" /><path d="M22.300 9.500h.7c1 0 1.500.5 1.500 1.400v2.400c0 .9-.5 1.400-1.500 1.400h-.7zM4 0 0 8h3l-1 5.500L8 5.500H5L6.500 0z" fill="#fff" /></svg>
          </TraySlot>
          <TraySlot $gap={24}>
            <TwoLines $right $ls={-0.28}>
              <div>3:48 PM</div>
              <div>10/10/2024</div>
            </TwoLines>
          </TraySlot>
          <TraySlot $gap={14}>
            <svg width="20" height="24" viewBox="0 0 20 24" fill="#fdd5e0"><path d="M10 0a7.700 7.700 0 0 0-7.700 7.700v6L.2 17.200c-.4.900 0 1.600.9 1.600h17.800c.9 0 1.300-.7.9-1.600l-2.100-3.500v-6A7.700 7.700 0 0 0 10 0zM6 20.300h8a4 3.300 0 0 1-8 0z" /></svg>
          </TraySlot>
        </Tray>
      </Taskbar>
    </Screen>
  );
}
